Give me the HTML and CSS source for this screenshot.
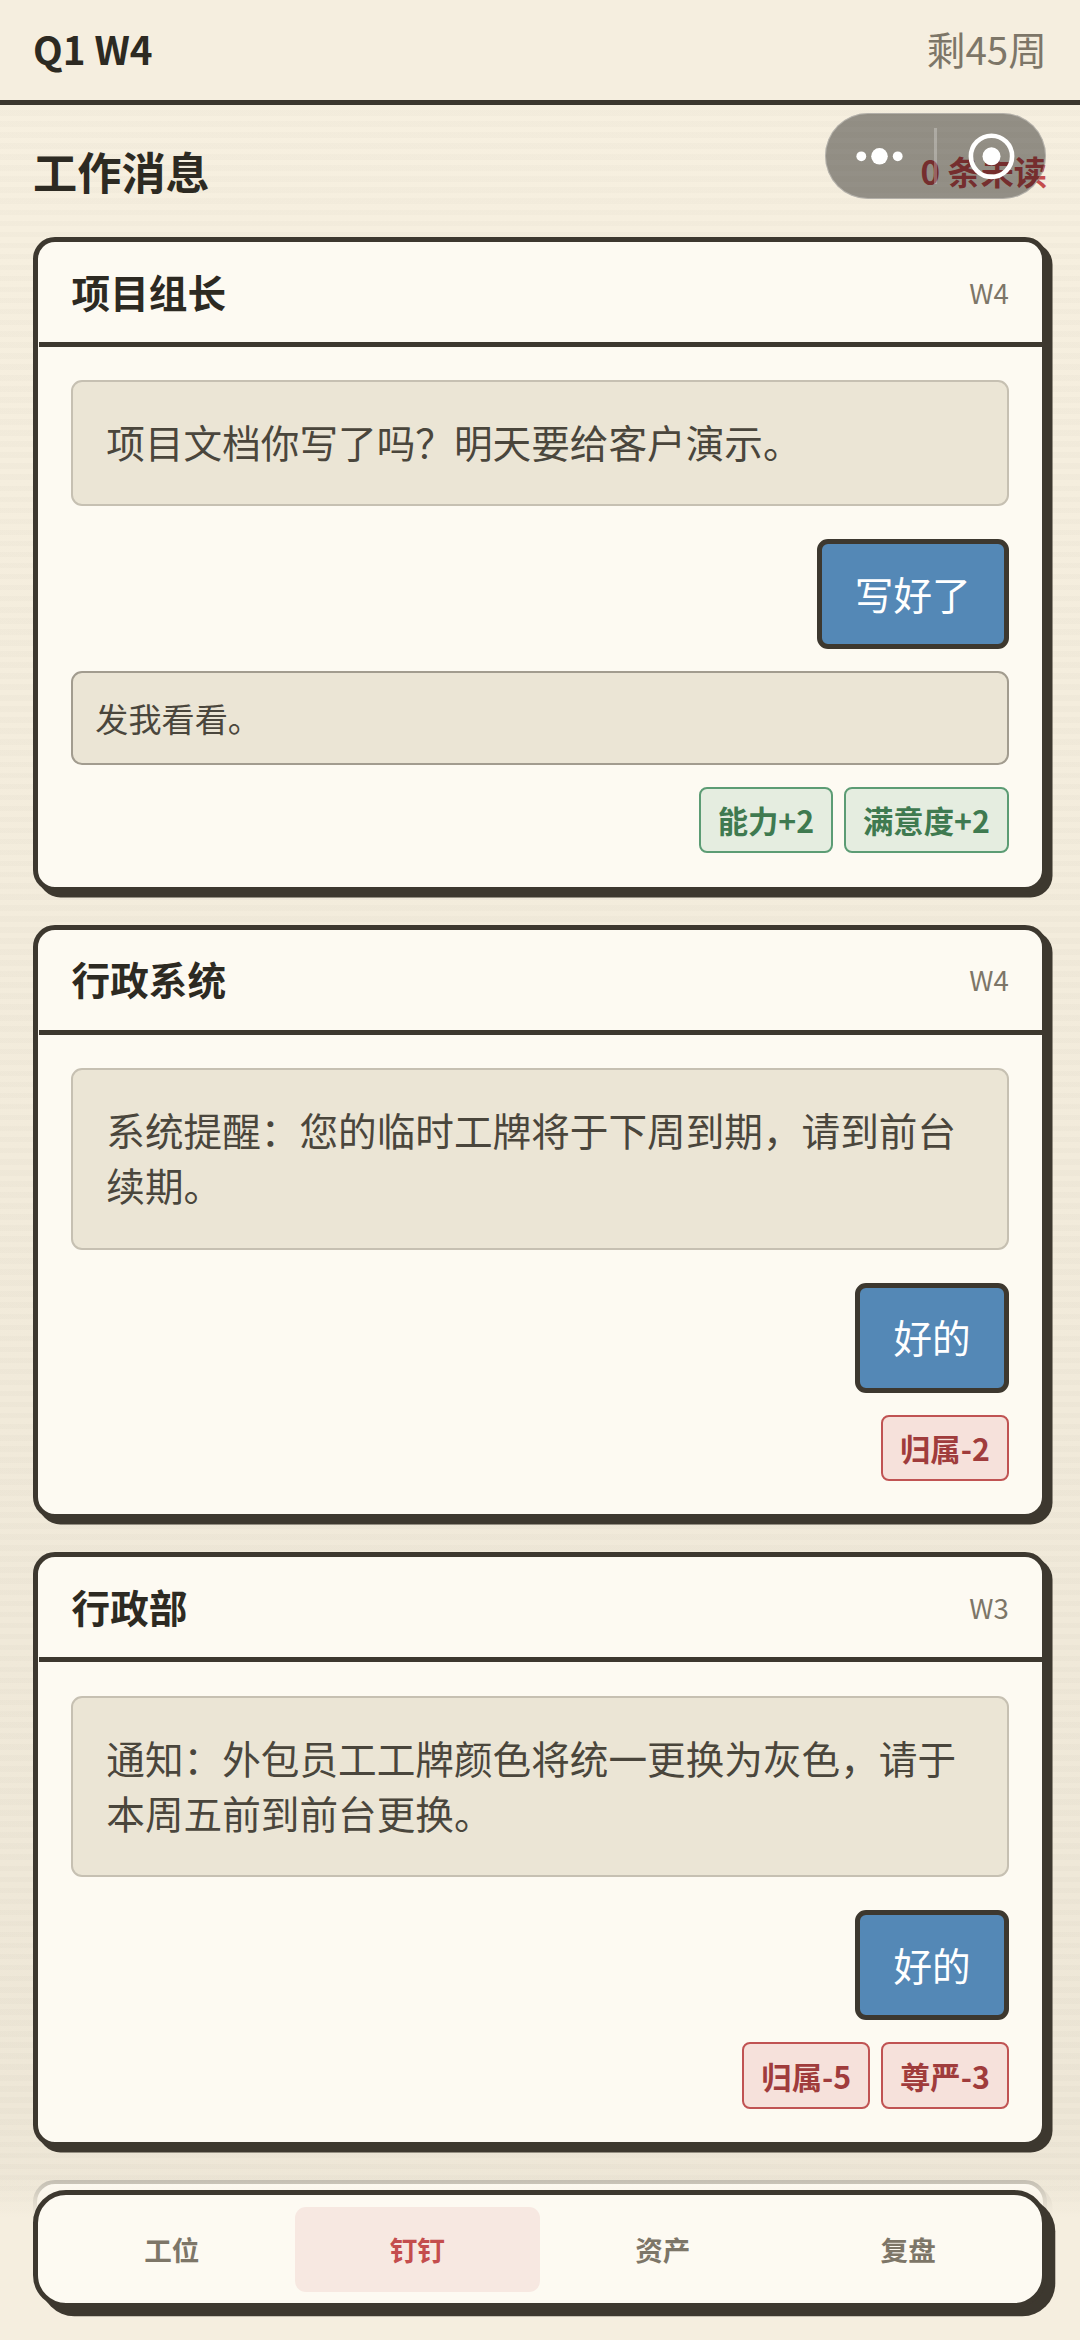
FILE: index.html
```html
<!DOCTYPE html>
<html lang="zh-CN">
<head>
<meta charset="utf-8">
<title>工作消息</title>
<link rel="stylesheet" href="styles.css">
</head>
<body>
<div class="app">
  <header class="topbar">
    <span class="period">Q1 W4</span>
    <span class="remaining">剩45周</span>
  </header>

  <main class="page">
    <div class="page-head">
      <h1 class="page-title">工作消息</h1>
      <span class="unread">0 条未读</span>
    </div>

    <section class="card">
      <div class="card-head"><h2 class="sender">项目组长</h2><span class="week">W4</span></div>
      <div class="card-body">
        <p class="message">项目文档你写了吗？明天要给客户演示。</p>
        <div class="answer">写好了</div>
        <p class="followup">发我看看。</p>
        <div class="effects"><span class="tag tag-up">能力+2</span><span class="tag tag-up">满意度+2</span></div>
      </div>
    </section>

    <section class="card">
      <div class="card-head"><h2 class="sender">行政系统</h2><span class="week">W4</span></div>
      <div class="card-body">
        <p class="message">系统提醒：您的临时工牌将于下周到期，请到前台续期。</p>
        <div class="answer">好的</div>
        <div class="effects"><span class="tag tag-down">归属-2</span></div>
      </div>
    </section>

    <section class="card">
      <div class="card-head"><h2 class="sender">行政部</h2><span class="week">W3</span></div>
      <div class="card-body">
        <p class="message">通知：外包员工工牌颜色将统一更换为灰色，请于本周五前到前台更换。</p>
        <div class="answer">好的</div>
        <div class="effects"><span class="tag tag-down">归属-5</span><span class="tag tag-down">尊严-3</span></div>
      </div>
    </section>

    <section class="card card-next"></section>
  </main>

  <div class="capsule">
    <svg class="capsule-icon" viewBox="0 0 221 86" width="221" height="86">
      <g fill="#fff">
        <circle cx="36.3" cy="43.3" r="4.9"/>
        <circle cx="54.5" cy="43.3" r="8.3"/>
        <circle cx="72.7" cy="43.3" r="4.9"/>
        <rect x="109" y="15" width="3" height="56" opacity=".25"/>
        <circle cx="166.5" cy="43.3" r="9"/>
      </g>
      <circle cx="166.5" cy="43.3" r="20.6" fill="none" stroke="#fff" stroke-width="4.6"/>
    </svg>
  </div>

  <div class="dock">
    <nav class="tabs">
      <a class="tab">工位</a>
      <a class="tab tab-active">钉钉</a>
      <a class="tab">资产</a>
      <a class="tab">复盘</a>
    </nav>
  </div>
</div>
</body>
</html>
```
FILE: styles.css
```css
* { box-sizing: border-box; }

body {
  margin: 0;
  font-family: "Noto Sans CJK SC", sans-serif;
  color: #2d2a22;
}

.app {
  position: relative;
  width: 1080px;
  height: 2340px;
  overflow: hidden;
  background:
    repeating-linear-gradient(to bottom, rgba(60, 56, 48, .018) 0 5.3px, rgba(60, 56, 48, 0) 5.3px 10.8px, rgba(60, 56, 48, .018) 10.8px 11.04px),
    linear-gradient(to bottom, #f7f0e0, #ede6d6);
}

.topbar {
  display: flex;
  justify-content: space-between;
  align-items: center;
  height: 105px;
  padding: 0 33.12px 4px;
  border-bottom: 5px solid #3d382f;
  background: #f5eedf;
  font-size: 38.64px;
  line-height: 56px;
}

.period { font-weight: 700; }
.remaining { color: #7d7668; }

.page { padding: 0 33.12px; }

.page-head {
  display: flex;
  justify-content: space-between;
  align-items: center;
  height: 132px;
}

.page-title {
  margin: 0;
  font-size: 44.16px;
  font-weight: 700;
}

.unread {
  font-size: 33.12px;
  font-weight: 700;
  color: #c44d4d;
}

.card {
  margin-bottom: 33.12px;
  border: 5px solid #3d382f;
  border-radius: 22px;
  background: #fdfaf2;
  box-shadow: 5.52px 5.52px 0 #3d382f;
}

.card-head {
  display: flex;
  justify-content: space-between;
  align-items: center;
  height: 105px;
  margin-left: 1px;
  padding: 0 33.12px 3px 32.5px;
  border-bottom: 5px solid #3d382f;
}

.sender {
  margin: 0;
  font-size: 38.64px;
  font-weight: 700;
}

.week {
  padding-top: 2px;
  font-size: 27.6px;
  color: #7d7668;
}

.card-body {
  display: flex;
  flex-direction: column;
  padding: 33.12px;
}

.message,
.followup {
  margin: 0;
  background: #ebe5d5;
  border: 2px solid #c6c0b2;
  border-radius: 11px;
  color: #4a463c;
}

.message {
  padding: 32px 33.12px 34.6px;
  font-size: 38.64px;
  line-height: 55.6px;
}

.answer {
  align-self: flex-end;
  margin-top: 33.12px;
  padding: 20.3px 33.12px 23.7px;
  border: 5px solid #3d382f;
  border-radius: 11px;
  background: #5488b6;
  color: #fff;
  font-size: 38.64px;
  line-height: 56px;
}

.followup {
  margin-top: 22.08px;
  padding: 20.3px 22.08px 21.1px;
  border-color: #a29c8f;
  font-size: 33.12px;
  line-height: 48px;
}

.effects {
  display: flex;
  justify-content: flex-end;
  gap: 11.04px;
  margin-top: 22.08px;
}

.tag {
  padding: 9.2px 16.9px 7.4px;
  border: 2px solid;
  border-radius: 8px;
  font-size: 30.36px;
  font-weight: 700;
  line-height: 45.9px;
}

.tag-up { background: #e5ede0; border-color: #5c9c74; color: #3f7a50; }
.tag-down { background: #f6e1db; border-color: #c05353; color: #a03c3c; }

.card-next {
  height: 300px;
  border: 4px solid #c1bcb0;
  box-shadow: 5.52px 5.52px 0 rgba(61, 56, 47, .1);
}

.capsule {
  position: absolute;
  top: 113px;
  left: 825px;
  width: 221px;
  height: 86px;
  border-radius: 43px;
  background: rgba(0, 0, 0, .4);
  box-shadow: inset 0 0 0 1px rgba(255, 255, 255, .3);
}

.capsule-icon { display: block; }

.dock {
  position: absolute;
  left: 0;
  right: 0;
  bottom: 0;
  padding: 12px 33.12px 32px;
  background: linear-gradient(to bottom, rgba(245, 238, 223, 0), #f5eedf 40px);
}

.tabs {
  display: flex;
  height: 118px;
  padding: 11.5px 11.04px;
  border: 5px solid #3d382f;
  border-radius: 33px;
  background: #fdfaf2;
  box-shadow: 8.28px 8.28px 0 #3d382f;
}

.tab {
  flex: 1;
  display: flex;
  align-items: center;
  justify-content: center;
  border-radius: 11px;
  font-size: 27.6px;
  font-weight: 700;
  color: #7d7668;
}

.tab-active { background: #f7e8e1; color: #c44d4d; }
```
